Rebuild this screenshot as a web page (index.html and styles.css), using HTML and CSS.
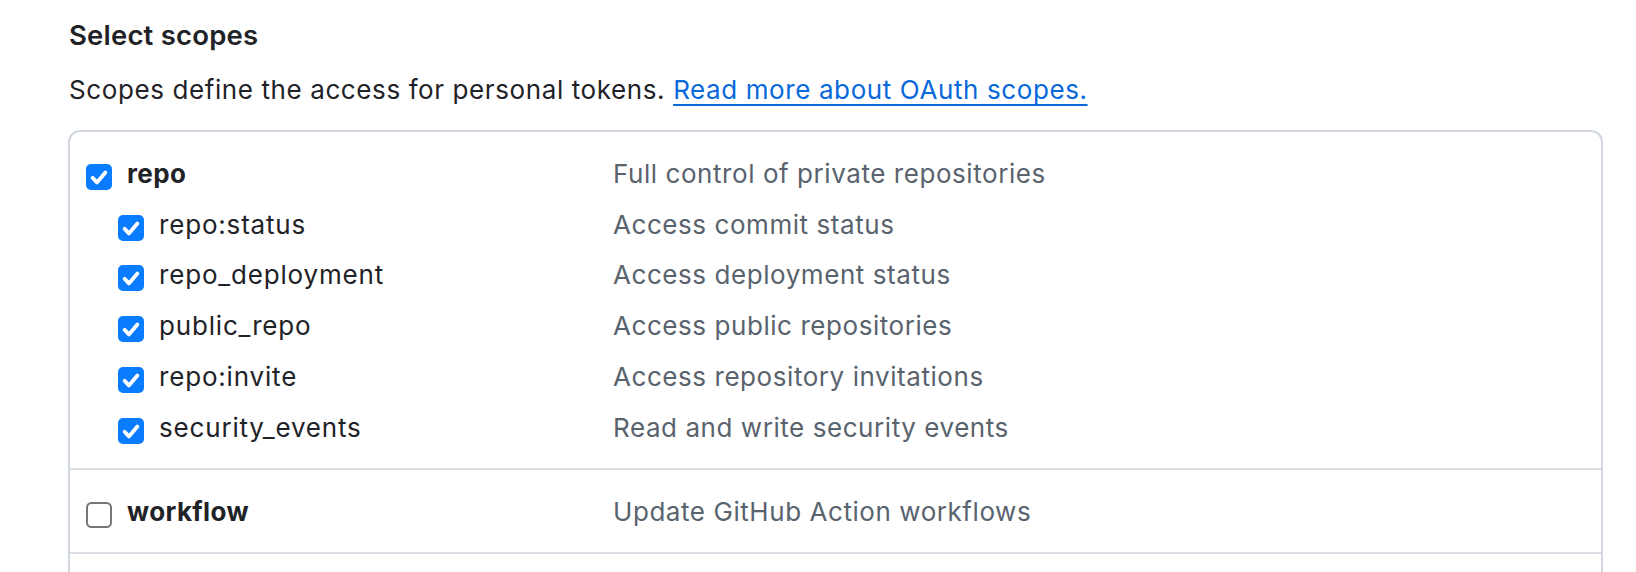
FILE: index.html
```html
<!DOCTYPE html>
<html lang="en">
<head>
<meta charset="utf-8">
<title>Select scopes</title>
<link rel="stylesheet" href="styles.css">
</head>
<body>
<div class="page">
  <h2 class="title">Select scopes</h2>
  <p class="lead">Scopes define the access for personal tokens. <a class="link" href="#">Read more about OAuth scopes.</a></p>
  <div class="scopes">
    <div class="group">
      <div class="row">
        <label class="name strong"><span class="cb on"><svg viewBox="0 0 26 26" width="26" height="26"><rect x="0" y="0" width="26" height="26" rx="5" fill="#0a7cff"/><path d="M6.6 13.8 L10.9 18.4 L19.4 8.6" fill="none" stroke="#fff" stroke-width="3.8" stroke-linecap="round" stroke-linejoin="round"/></svg></span><span class="txt">repo</span></label>
        <span class="desc"><span class="txt">Full control of private repositories</span></span>
      </div>
      <div class="row sub">
        <label class="name"><span class="cb on"><svg viewBox="0 0 26 26" width="26" height="26"><rect x="0" y="0" width="26" height="26" rx="5" fill="#0a7cff"/><path d="M6.6 13.8 L10.9 18.4 L19.4 8.6" fill="none" stroke="#fff" stroke-width="3.8" stroke-linecap="round" stroke-linejoin="round"/></svg></span><span class="txt">repo:status</span></label>
        <span class="desc"><span class="txt">Access commit status</span></span>
      </div>
      <div class="row sub">
        <label class="name"><span class="cb on"><svg viewBox="0 0 26 26" width="26" height="26"><rect x="0" y="0" width="26" height="26" rx="5" fill="#0a7cff"/><path d="M6.6 13.8 L10.9 18.4 L19.4 8.6" fill="none" stroke="#fff" stroke-width="3.8" stroke-linecap="round" stroke-linejoin="round"/></svg></span><span class="txt">repo_deployment</span></label>
        <span class="desc"><span class="txt">Access deployment status</span></span>
      </div>
      <div class="row sub">
        <label class="name"><span class="cb on"><svg viewBox="0 0 26 26" width="26" height="26"><rect x="0" y="0" width="26" height="26" rx="5" fill="#0a7cff"/><path d="M6.6 13.8 L10.9 18.4 L19.4 8.6" fill="none" stroke="#fff" stroke-width="3.8" stroke-linecap="round" stroke-linejoin="round"/></svg></span><span class="txt">public_repo</span></label>
        <span class="desc"><span class="txt">Access public repositories</span></span>
      </div>
      <div class="row sub">
        <label class="name"><span class="cb on"><svg viewBox="0 0 26 26" width="26" height="26"><rect x="0" y="0" width="26" height="26" rx="5" fill="#0a7cff"/><path d="M6.6 13.8 L10.9 18.4 L19.4 8.6" fill="none" stroke="#fff" stroke-width="3.8" stroke-linecap="round" stroke-linejoin="round"/></svg></span><span class="txt">repo:invite</span></label>
        <span class="desc"><span class="txt">Access repository invitations</span></span>
      </div>
      <div class="row sub">
        <label class="name"><span class="cb on"><svg viewBox="0 0 26 26" width="26" height="26"><rect x="0" y="0" width="26" height="26" rx="5" fill="#0a7cff"/><path d="M6.6 13.8 L10.9 18.4 L19.4 8.6" fill="none" stroke="#fff" stroke-width="3.8" stroke-linecap="round" stroke-linejoin="round"/></svg></span><span class="txt">security_events</span></label>
        <span class="desc"><span class="txt">Read and write security events</span></span>
      </div>
    </div>
    <div class="group">
      <div class="row">
        <label class="name strong"><span class="cb"><svg viewBox="0 0 26 26" width="26" height="26"><rect x="1" y="1" width="24" height="24" rx="4.5" fill="#fff" stroke="#767676" stroke-width="2"/></svg></span><span class="txt">workflow</span></label>
        <span class="desc"><span class="txt">Update GitHub Action workflows</span></span>
      </div>
    </div>
    <div class="group last"></div>
  </div>
</div>
</body>
</html>
```

FILE: styles.css
```css
html, body {
  margin: 0;
  padding: 0;
  background: #ffffff;
}

body {
  font-family: Inter, "Noto Sans", "Liberation Sans", sans-serif;
  color: #1f2328;
  overflow: hidden;
}

.page {
  padding: 17px 33px 0 68px;
}

.title {
  margin: 0;
  font-size: 27.5px;
  line-height: 36px;
  font-weight: 600;
  letter-spacing: 0.2px;
  padding-left: 1px;
}

.lead {
  margin: 19px 0 0 0;
  font-size: 26px;
  line-height: 36px;
  letter-spacing: 0.6px;
  padding-left: 1px;
}

.link {
  color: #0969da;
  text-decoration: underline;
  text-decoration-thickness: 2px;
  text-underline-offset: 5px;
}

.scopes {
  margin-top: 22px;
  border: 2px solid #d0d7de;
  border-radius: 12px;
  border-bottom: none;
  border-bottom-left-radius: 0;
  border-bottom-right-radius: 0;
}

.group {
  padding: 19.5px 16px 11.5px 16px;
  border-bottom: 2px solid #d8dee4;
}

.group.last {
  border-bottom: none;
  height: 40px;
}

.row {
  display: grid;
  grid-template-columns: 527px 1fr;
  align-items: center;
  height: 50.8px;
  font-size: 26px;
  letter-spacing: 0.56px;
}

.row.sub .name {
  padding-left: 32px;
}

.name {
  display: flex;
  align-items: center;
  gap: 15px;
  color: #1f2328;
  letter-spacing: 0.82px;
}

.name.strong {
  font-weight: 700;
  letter-spacing: 0.4px;
}

.txt {
  display: inline-block;
  padding-bottom: 7px;
}

.desc {
  display: flex;
  align-items: center;
  color: #59636e;
}

.cb {
  display: inline-flex;
  width: 26px;
  height: 26px;
  flex: none;
}
```
